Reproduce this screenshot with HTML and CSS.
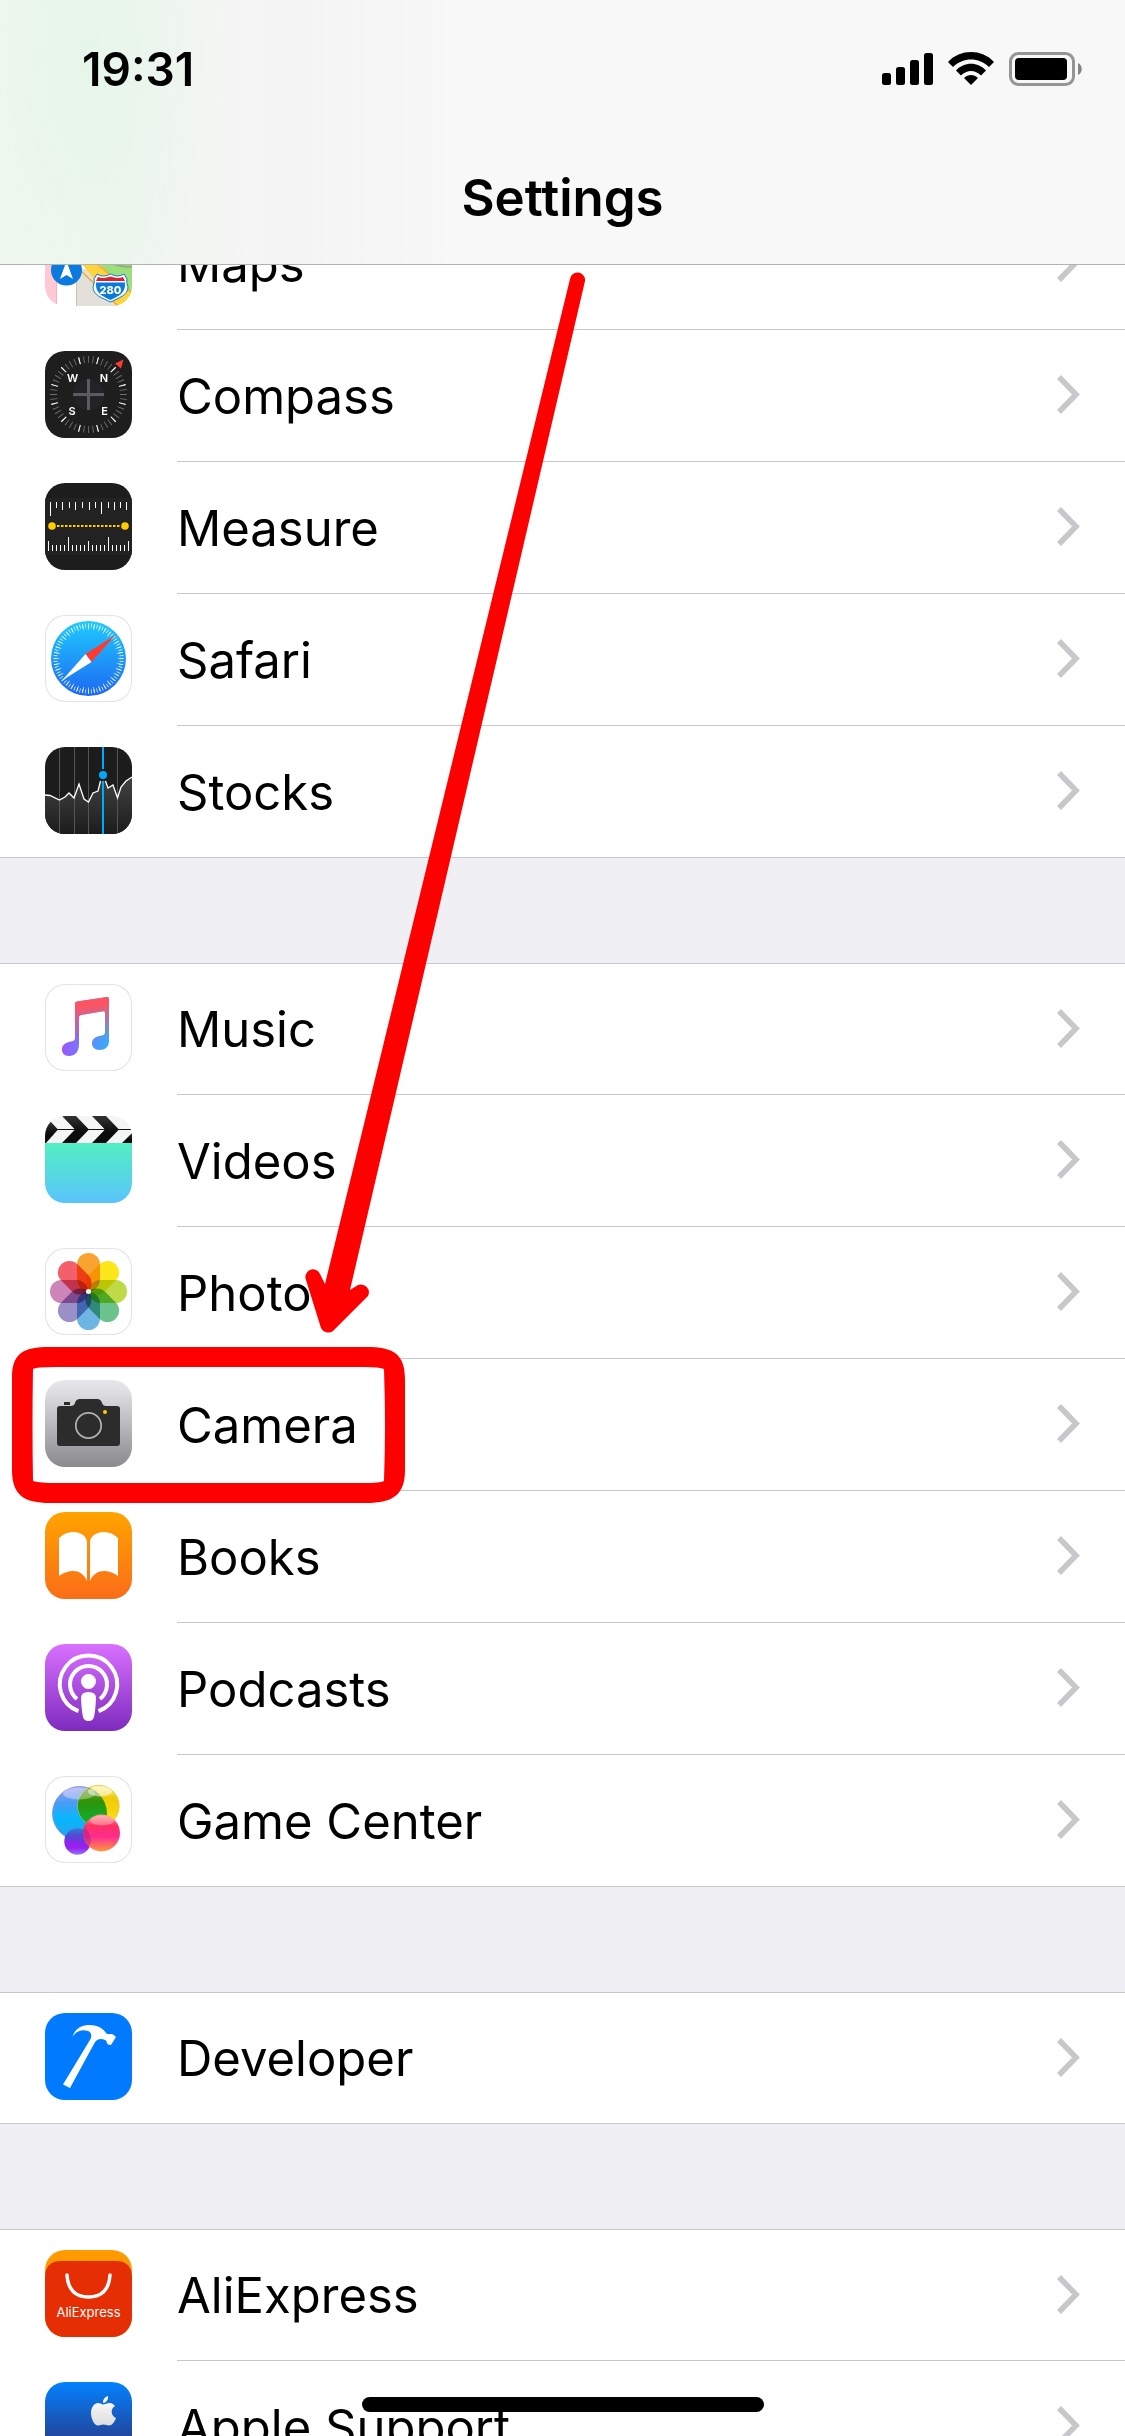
FILE: index.html
```html
<!DOCTYPE html>
<html lang="en">
<head>
<meta charset="utf-8">
<meta name="viewport" content="width=device-width, initial-scale=1">
<title>Settings</title>
<link rel="stylesheet" href="styles.css">
</head>
<body>
<svg class="defs" aria-hidden="true">
  <defs>
    <symbol id="chevron" viewBox="0 0 23 39"><path d="M2 2 19 19.500 2 37" fill="none" stroke="#c7c7cc" stroke-width="5.600"/></symbol>
    <linearGradient id="g-safari" x2="0" y2="1"><stop stop-color="#1fcbfe"/><stop offset="1" stop-color="#1d68f2"/></linearGradient>
    <linearGradient id="g-stocks" x2="0" y2="1"><stop stop-color="#434344"/><stop offset="1" stop-color="#1c1c1d"/></linearGradient>
    <linearGradient id="g-note" gradientUnits="userSpaceOnUse" x1="17" y1="0" x2="64" y2="0"><stop stop-color="#9b57ff"/><stop offset="1" stop-color="#35adfb"/></linearGradient>
    <linearGradient id="g-note-top" gradientUnits="userSpaceOnUse" x1="40" y1="22" x2="44" y2="58"><stop stop-color="#fd5464"/><stop offset="1" stop-color="#fd5464" stop-opacity="0"/></linearGradient>
    <linearGradient id="g-videos" x2="0" y2="1"><stop stop-color="#53efc2"/><stop offset="1" stop-color="#5ac3fc"/></linearGradient>
    <linearGradient id="g-clap" x2="0" y2="1"><stop stop-color="#333"/><stop offset=".6" stop-color="#0c0c0c"/></linearGradient>
    <linearGradient id="g-camera" x2="0" y2="1"><stop stop-color="#e6e6eb"/><stop offset=".15" stop-color="#dcdce1"/><stop offset="1" stop-color="#89898e"/></linearGradient>
    <linearGradient id="g-books" x2="0" y2="1"><stop stop-color="#ffa400"/><stop offset="1" stop-color="#fa6c18"/></linearGradient>
    <linearGradient id="g-podcasts" x2="0" y2="1"><stop stop-color="#d970ff"/><stop offset="1" stop-color="#7d2bbd"/></linearGradient>
    <linearGradient id="g-blue" x2="0" y2="1"><stop stop-color="#a7a2ee"/><stop offset=".3" stop-color="#4a9bf6"/><stop offset=".6" stop-color="#06b7ff"/><stop offset="1" stop-color="#2f9fe0"/></linearGradient>
    <linearGradient id="g-yellow" x2="0" y2="1"><stop stop-color="#fdf3a0"/><stop offset=".3" stop-color="#eecb06"/><stop offset="1" stop-color="#ffe21a"/></linearGradient>
    <linearGradient id="g-green" x2="0" y2="1"><stop stop-color="#8a9c2c"/><stop offset=".4" stop-color="#2d9406"/><stop offset="1" stop-color="#06b63c"/></linearGradient>
    <linearGradient id="g-pink" x2="0" y2="1"><stop stop-color="#ff9a92"/><stop offset=".3" stop-color="#ff3260"/><stop offset=".6" stop-color="#ff2b92"/><stop offset="1" stop-color="#ff9a3c"/></linearGradient>
    <linearGradient id="g-purple" x2="0" y2="1"><stop stop-color="#3b78d8"/><stop offset=".25" stop-color="#4a50d0"/><stop offset=".5" stop-color="#8a25e8"/><stop offset=".75" stop-color="#9a20f0"/><stop offset="1" stop-color="#8a7cfa"/></linearGradient>
    <linearGradient id="g-support" x2="0" y2="1"><stop stop-color="#0482ff"/><stop offset=".6" stop-color="#2049a2"/><stop offset="1" stop-color="#1c3f90"/></linearGradient>
    <linearGradient id="g-apple" x2="0" y2="1"><stop stop-color="#fff"/><stop offset="1" stop-color="#dcdcdc"/></linearGradient>
    <rect id="petal" x="32" y="5" width="23" height="38" rx="11.500"/>
    <clipPath id="clip-blue"><circle cx="34.500" cy="37.500" r="27.500"/></clipPath>
  </defs>
</svg>

<header class="top-bar">
  <div class="status">
    <time class="clock">19:31</time>
    <div class="indicators">
      <svg width="51" height="34" viewBox="0 0 51 34" role="img" aria-label="Signal"><g><rect y="21" width="9" height="12" rx="2.500"/><rect x="14" y="15" width="9" height="18" rx="2.500"/><rect x="28" y="8" width="9" height="25" rx="2.500"/><rect x="42" y="1" width="9" height="32" rx="2.500"/></g></svg>
      <svg width="46" height="34" viewBox="0 0 46 34" role="img" aria-label="Wi-Fi"><path d="M0 10C12-3.300 34-3.300 46 10L41 15C31 5 15 5 5 15Z"/><path d="M8 18.500C16 9.500 30 9.500 38 18.500L33 23.500C27 17.500 19 17.500 13 23.500Z"/><path d="M16 26C20 22 26 22 30 26L23 33Z"/></svg>
      <svg width="73" height="34" viewBox="0 0 73 34" role="img" aria-label="Battery"><rect x="1.500" y="1.500" width="63" height="31" rx="8" fill="none" stroke="#959595" stroke-width="3"/><rect x="6" y="6" width="52" height="22" rx="4"/><path d="M69 11C74 13 74 21 69 23Z" fill="#858585"/></svg>
    </div>
  </div>
  <h1 class="title">Settings</h1>
</header>

<main class="scroller">
  <ul class="group group-first">
    <li><a class="row" href="#maps">
      <svg class="icon" viewBox="0 0 87 87"><rect width="87" height="87" fill="#fff"/><path d="M0 0H11V87H0Z" fill="#ffc8d2"/><path d="M11 0H12V87H11Z" fill="#f0b5c0"/><path d="M31 50H60L87 87H31Z" fill="#e3e0d9"/><path d="M31 50H32V87H31Z" fill="#c4c2bb"/><path d="M40 30H87V80Z" fill="#9ddf78"/><path d="M68 45Q78 48.500 87 47.500" fill="none" stroke="#8fae7c" stroke-width="2"/><path d="M30 40 35 43 72 87H84L87 74 45 40Z" fill="#ffd43a"/><path d="M35 51 73 87M51 44 87 74" fill="none" stroke="#f9a62d" stroke-width="1.500"/><circle cx="21.500" cy="51" r="15.500" fill="#0a7ade"/><path d="M21.500 42 28 60 21.500 56 15 60Z" fill="#fff"/><path d="M52 55Q58 59 65.500 55Q73 59 79 55L82 60Q81 63 83 68C83 76 74 79 65.500 83C57 79 48 76 48 68Q50 63 49 60Z" fill="#fff" stroke="#0a7ade"/><path d="M53 58Q59 60 65.500 57.500Q72 60 78 58L80 62H51Z" fill="#d8252d"/><path d="M51 63.500H80C81 74 74 77 65.500 81C57 77 50 74 51 63.500Z" fill="#0a7ade"/><text class="i-bold" x="65.500" y="75" font-size="11" fill="#fff">280</text></svg>
      <span class="row-body"><span class="label">Maps</span><svg class="chevron"><use href="#chevron"/></svg></span></a></li>
    <li><a class="row" href="#compass">
      <svg class="icon" viewBox="0 0 87 87"><rect width="87" height="87" fill="#1e1e1e"/><circle cx="43.500" cy="43.500" r="35" fill="none" stroke="#6e6e6e" stroke-width="7" pathLength="4800" stroke-dasharray="20 80" stroke-dashoffset="10"/><circle cx="43.500" cy="43.500" r="35" fill="none" stroke="#fff" stroke-width="7" pathLength="1200" stroke-dasharray="6 94" stroke-dashoffset="3" transform="rotate(15 43.500 43.500)"/><path d="M70 12.500 78.500 8.500 76 17.500Z" fill="#ff3b30"/><circle cx="43.500" cy="43.500" r="15.500" fill="#232327"/><path d="M28 43.500H59M43.500 28V59" stroke="#5c5c5e" stroke-width="3"/><g class="i-semi" font-size="11" fill="#fff"><text x="27.500" y="31">W</text><text x="59" y="31">N</text><text x="27" y="64">S</text><text x="59.500" y="64">E</text></g></svg>
      <span class="row-body"><span class="label">Compass</span><svg class="chevron"><use href="#chevron"/></svg></span></a></li>
    <li><a class="row" href="#measure">
      <svg class="icon" viewBox="0 0 87 87"><rect width="87" height="87" fill="#1d1d1d"/><rect y="15" width="87" height="57" fill="#222"/><path d="M5.500 19V33M11.500 19v6M17.500 19v8M24.500 19v6M30.500 19v8M37.500 19v6M44.500 19v8M50.500 19v6M56.500 19v12M63.500 19v6M69.500 19v8M75.500 19v6M81.500 19v8M3.500 68V58M7.500 68v-6M11.500 68v-6M15.500 68v-6M19.500 68v-6M23.500 68V54M27.500 68v-6M31.500 68v-6M35.500 68v-6M39.500 68v-6M43.500 68V58M47.500 68v-6M51.500 68v-6M55.500 68v-6M59.500 68v-6M63.500 68V54M67.500 68v-6M71.500 68v-6M75.500 68v-6M79.500 68v-6M83.500 68V58" stroke="#fff" fill="none"/><path d="M12 43H76" stroke="#fc0" stroke-width="2" stroke-dasharray="2.500 1.500"/><circle cx="7" cy="43" r="3.800" fill="#fc0"/><circle cx="80" cy="43" r="3.800" fill="#fc0"/></svg>
      <span class="row-body"><span class="label">Measure</span><svg class="chevron"><use href="#chevron"/></svg></span></a></li>
    <li><a class="row" href="#safari">
      <svg class="icon outlined" viewBox="0 0 87 87"><circle cx="43.500" cy="43.500" r="37.500" fill="url(#g-safari)"/><circle cx="43.500" cy="43.500" r="33" fill="none" stroke="#fff" stroke-opacity=".85" stroke-width="4" pathLength="7200" stroke-dasharray="28 72" stroke-dashoffset="14"/><circle cx="43.500" cy="43.500" r="32" fill="none" stroke="#fff" stroke-opacity=".85" stroke-width="6" pathLength="3600" stroke-dasharray="14 86" stroke-dashoffset="7"/><path d="M70.500 20 40.500 39 46.500 47Z" fill="#ff3b30"/><path d="M17 65.500 40.500 39 46.500 47Z" fill="#fff"/></svg>
      <span class="row-body"><span class="label">Safari</span><svg class="chevron"><use href="#chevron"/></svg></span></a></li>
    <li><a class="row" href="#stocks">
      <svg class="icon" viewBox="0 0 87 87"><rect width="87" height="87" fill="#1c1c1c"/><path d="M0 48 5 48.500 14.500 53 20 50 24 46 29 51 34 37 39 52 43.500 55 48 46 53 44 56 34H61L63 41 68 38 72.500 51 76 40 81 34 87 30V87H0Z" fill="url(#g-stocks)"/><path d="M14.500 0V87M29.500 0V87M43.500 0V87M72.500 0V87" stroke="#555"/><path d="M0 48 5 48.500 14.500 53 20 50 24 46 29 51 34 37 39 52 43.500 55 48 46 53 44 55.500 34M60.500 34 63 41 68 38 72.500 51 76 40 81 34 87 30" fill="none" stroke="#fff" stroke-width="1.300"/><path d="M58 0V22M58 34V87" stroke="#00a9ff" stroke-width="2"/><circle cx="58" cy="28" r="4" fill="#00a9ff"/></svg>
      <span class="row-body"><span class="label">Stocks</span><svg class="chevron"><use href="#chevron"/></svg></span></a></li>
  </ul>

  <ul class="group">
    <li><a class="row" href="#music">
      <svg class="icon outlined" viewBox="0 0 87 87"><path fill="url(#g-note)" d="M30 20Q30 18 32 17.600L62 13Q64 13 64 15V57C64 63 60 66 54.500 66C49.500 66 47 63 47 59.500C47 55 50 53 54 52L57 51.400Q60 50.800 60 48V28.500Q60 27 58 27.300L36 31Q34 31.400 34 33V60C34 68 30 72 24 72C19 72 17 69 17 65.500C17 61 20 59 24 58L27 57.300Q30 56.700 30 54Z"/><path fill="url(#g-note-top)" d="M30 20Q30 18 32 17.600L62 13Q64 13 64 15V57C64 63 60 66 54.500 66C49.500 66 47 63 47 59.500C47 55 50 53 54 52L57 51.400Q60 50.800 60 48V28.500Q60 27 58 27.300L36 31Q34 31.400 34 33V60C34 68 30 72 24 72C19 72 17 69 17 65.500C17 61 20 59 24 58L27 57.300Q30 56.700 30 54Z"/></svg>
      <span class="row-body"><span class="label">Music</span><svg class="chevron"><use href="#chevron"/></svg></span></a></li>
    <li><a class="row" href="#videos">
      <svg class="icon" viewBox="0 0 87 87"><rect width="87" height="27" fill="#f5f5f5"/><rect y="27" width="87" height="60" fill="url(#g-videos)"/><g fill="url(#g-clap)"><path d="M17 0H31L44 13.500 31 27H17L30 13.500Z"/><path d="M47 0H61L74 13.500 61 27H47L60 13.500Z"/><path d="M0 10 5 5 13 13.500 1 27H0Z"/><path d="M77 27 87 17V27Z"/></g><path d="M12 13.500H86" stroke="#111"/></svg>
      <span class="row-body"><span class="label">Videos</span><svg class="chevron"><use href="#chevron"/></svg></span></a></li>
    <li><a class="row" href="#photos">
      <svg class="icon outlined" viewBox="0 0 87 87"><g class="petals"><use href="#petal" fill="#f9a431"/><use href="#petal" fill="#fce71c" transform="rotate(45 43.500 43.500)"/><use href="#petal" fill="#bedb47" transform="rotate(90 43.500 43.500)"/><use href="#petal" fill="#6cc48c" transform="rotate(135 43.500 43.500)"/><use href="#petal" fill="#6db5e2" transform="rotate(180 43.500 43.500)"/><use href="#petal" fill="#9b8fc7" transform="rotate(225 43.500 43.500)"/><use href="#petal" fill="#cd84b8" transform="rotate(270 43.500 43.500)"/><use href="#petal" fill="#f3606a" transform="rotate(315 43.500 43.500)"/></g><circle cx="43.500" cy="43.500" r="2.500" fill="#fff"/></svg>
      <span class="row-body"><span class="label">Photos</span><svg class="chevron"><use href="#chevron"/></svg></span></a></li>
    <li><a class="row" href="#camera">
      <svg class="icon" viewBox="0 0 87 87"><rect width="87" height="87" fill="url(#g-camera)"/><path d="M19 22h6v3h-6ZM15 26H26Q29 26 30 23Q31 19 35 19H52Q56 19 57 23Q58 26 61 26H72Q75 26 75 29V63Q75 66 72 66H15Q12 66 12 63V29Q12 26 15 26Z" fill="#2c2c2c"/><circle cx="43.500" cy="45.500" r="12.700" fill="none" stroke="#b0b0b5" stroke-width="1.800"/><circle cx="60" cy="32" r="2" fill="#fc0"/></svg>
      <span class="row-body"><span class="label">Camera</span><svg class="chevron"><use href="#chevron"/></svg></span></a></li>
    <li><a class="row" href="#books">
      <svg class="icon" viewBox="0 0 87 87"><rect width="87" height="87" fill="url(#g-books)"/><path d="M14 26Q20 20 28 20C36 20 42 24 42 31V69C39 62 34 59 28 59Q21 59 14 64Z" fill="#fff"/><path d="M73 26Q67 20 59 20C51 20 45 24 45 31V69C48 62 53 59 59 59Q66 59 73 64Z" fill="#fff"/></svg>
      <span class="row-body"><span class="label">Books</span><svg class="chevron"><use href="#chevron"/></svg></span></a></li>
    <li><a class="row" href="#podcasts">
      <svg class="icon" viewBox="0 0 87 87"><rect width="87" height="87" fill="url(#g-podcasts)"/><g fill="none" stroke="#fff" stroke-width="4"><path d="M33.500 67.200A28.700 28.700 0 1 1 53.500 67.200"/><path d="M32 55A18.500 18.500 0 1 1 55 55"/></g><circle cx="43.500" cy="37.500" r="7.500" fill="#fff"/><path d="M36 54Q36 48 43.500 48Q51 48 51 54Q50.500 66 49 73Q48 77 43.500 77Q39 77 38 73Q36.500 66 36 54Z" fill="#fff"/></svg>
      <span class="row-body"><span class="label">Podcasts</span><svg class="chevron"><use href="#chevron"/></svg></span></a></li>
    <li><a class="row" href="#game-center">
      <svg class="icon outlined" viewBox="0 0 87 87"><circle cx="34.500" cy="37.500" r="27" fill="url(#g-blue)" stroke="#7d8fdc" stroke-width=".8"/><circle cx="53.500" cy="30" r="20.700" fill="url(#g-yellow)" stroke="#e0c83c" stroke-width=".8"/><circle cx="53.500" cy="30" r="20.700" fill="url(#g-green)" clip-path="url(#clip-blue)"/><ellipse cx="34" cy="17.500" rx="16" ry="6" fill="#fff" opacity=".35"/><ellipse cx="55" cy="15.500" rx="12" ry="5" fill="#fff" opacity=".5"/><circle cx="32.500" cy="65.500" r="13.200" fill="url(#g-purple)"/><path d="M20 60A27 27 0 0 0 45 62" fill="none" stroke="#2a5fc0" stroke-width=".8"/><circle cx="56.500" cy="57" r="18.500" fill="url(#g-pink)"/><path d="M39 51Q36 60 43.500 70Q47 67 45.500 62Q44 55 39 51Z" fill="#8c1c8c" opacity=".4"/><ellipse cx="57" cy="44.500" rx="12" ry="5" fill="#fff" opacity=".3"/></svg>
      <span class="row-body"><span class="label">Game Center</span><svg class="chevron"><use href="#chevron"/></svg></span></a></li>
  </ul>

  <ul class="group">
    <li><a class="row" href="#developer">
      <svg class="icon" viewBox="0 0 87 87"><rect width="87" height="87" fill="#007aff"/><path d="M27.500 24C30 15 37 12 45 12C53 12 58.500 16 61 20C62 22 66 20.500 68 21.500L71 24 66 32 63 31.500Q61.500 30.500 61.500 28C58 25 52 25 49.500 30L25 75 18 71.500 45.500 26C47 23 46.500 19.500 43 18C37 16 31 18 27.500 24Z" fill="#fff"/></svg>
      <span class="row-body"><span class="label">Developer</span><svg class="chevron"><use href="#chevron"/></svg></span></a></li>
  </ul>

  <ul class="group">
    <li><a class="row" href="#aliexpress">
      <svg class="icon" viewBox="0 0 87 87"><rect width="87" height="87" fill="#ff9b00"/><path d="M0 28Q0 11 16 11H71Q87 11 87 28V87H0Z" fill="#e62e04"/><path d="M22 25C23 40 31 47 43.500 47C56 47 64 40 65 25" fill="none" stroke="#fff" stroke-width="3.500" stroke-linecap="round"/><text class="i-ali" x="43.500" y="67" font-size="13" fill="#fff">AliExpress</text></svg>
      <span class="row-body"><span class="label">AliExpress</span><svg class="chevron"><use href="#chevron"/></svg></span></a></li>
    <li><a class="row" href="#apple-support">
      <svg class="icon" viewBox="0 0 87 87"><rect width="87" height="87" fill="url(#g-support)"/><path d="M58 21C58 17 60 15 63 14C63.500 18 61 21 58 21ZM58 22.500C60 22.500 62 21 64.500 21C67 21 69 22.500 70 24C65 27 66 34 71 36C69.500 40 67 43.500 64 43.500C62 43.500 61 42.500 58.500 42.500C56 42.500 55 43.500 53 43.500C49.500 43.500 46 37 46 31C46 25 49.500 21 53 21C55.500 21 57 22.500 58 22.500Z" fill="url(#g-apple)"/></svg>
      <span class="row-body"><span class="label">Apple Support</span><svg class="chevron"><use href="#chevron"/></svg></span></a></li>
  </ul>
</main>

<svg class="markup" width="600" height="1520" viewBox="0 0 600 1520" aria-hidden="true">
  <path d="M306 1280A7.500 7.500 0 0 1 320 1274L325 1284 570 279A7.500 7.500 0 0 1 585 281L350 1290 358 1285A8 8 0 0 1 368 1296L333 1331A8 8 0 0 1 321 1328Z"/>
  <path fill-rule="evenodd" d="M12 1378C12 1354 22 1347 50 1347H366C394 1347 405 1354 405 1380V1470C405 1494 394 1503 366 1503H50C24 1503 12 1495 12 1470ZM33 1369Q32 1425 33 1481Q40 1483 56 1483H364Q380 1483 384 1481Q386 1425 384 1369Q380 1367 364 1367H56Q36 1367 33 1369Z"/>
</svg>
<div class="home-indicator"></div>
</body>
</html>
```
FILE: styles.css
```css
* {
  box-sizing: border-box;
}

body {
  margin: 0;
  height: 100vh;
  display: flex;
  flex-direction: column;
  overflow: hidden;
  background: #efeff4;
  color: #000;
  font-family: Inter, "Liberation Sans", sans-serif;
}

.defs {
  position: absolute;
  width: 0;
  height: 0;
}

.top-bar {
  flex: none;
  padding-top: 35px;
  border-bottom: 1px solid #b2b2b2;
  background:
    radial-gradient(ellipse 130px 300px at 90px 60px, #e7f6ea, rgba(231, 246, 234, 0)),
    linear-gradient(90deg, #eef7ef 0, #eff6ef 120px, #f3f5f3 200px, #f4f4f4 300px, #f6f6f6 380px, #f8f8f8 460px);
}

.status {
  display: flex;
  justify-content: space-between;
  align-items: center;
  height: 68px;
  padding: 0 43px 0 82px;
}

.clock {
  font-size: 46px;
  font-weight: 600;
  line-height: 68px;
}

.indicators {
  display: flex;
  gap: 15px;
}

.title {
  margin: 0;
  padding: 64px 0 35px;
  font-size: 51px;
  font-weight: 600;
  line-height: 62px;
  text-align: center;
}

.scroller {
  flex: 1;
  min-height: 0;
  overflow: hidden;
}

.group {
  margin: 0 0 105px;
  padding: 0;
  list-style: none;
  background: #fff;
  border-top: 1px solid #c8c7cc;
  border-bottom: 1px solid #c8c7cc;
}

/* the list is scrolled so that the first row is partly under the bar */
.group-first {
  margin-top: -68px;
}

.row {
  display: flex;
  gap: 45px;
  padding-left: 45px;
  color: inherit;
  text-decoration: none;
}

.icon {
  flex: none;
  width: 87px;
  height: 87px;
  margin-top: 21px;
  border-radius: 20px;
  overflow: hidden;
}

.outlined {
  background: #fff;
  box-shadow: inset 0 0 0 1px #e3e3e5;
}

.row-body {
  flex: 1;
  display: flex;
  justify-content: space-between;
  align-items: center;
  height: 132px;
  padding: 0 45px 2px 0;
  border-bottom: 1px solid #c8c7cc;
}

.group li:last-child .row-body {
  height: 131px;
  border-bottom: 0;
}

.group:not(.group-first) li:first-child .icon {
  margin-top: 20px;
}

.group:not(.group-first) li:first-child .row-body {
  height: 131px;
}

.group li:only-child .row-body.row-body {
  height: 130px;
}

.label {
  padding-top: 4px;
  font-size: 49px;
  line-height: 60px;
}

.chevron {
  width: 23px;
  height: 39px;
}

.petals {
  isolation: isolate;
}

.petals use {
  mix-blend-mode: multiply;
}

.i-bold,
.i-semi,
.i-ali {
  text-anchor: middle;
}

.i-bold {
  font-weight: 800;
}

.i-semi {
  font-weight: 600;
}

.markup {
  position: absolute;
  top: 0;
  left: 0;
  fill: #f00;
  pointer-events: none;
}

.home-indicator {
  position: absolute;
  left: 50%;
  bottom: 24px;
  width: 402px;
  height: 15px;
  border-radius: 8px;
  background: #000;
  transform: translateX(-50%);
}
```
